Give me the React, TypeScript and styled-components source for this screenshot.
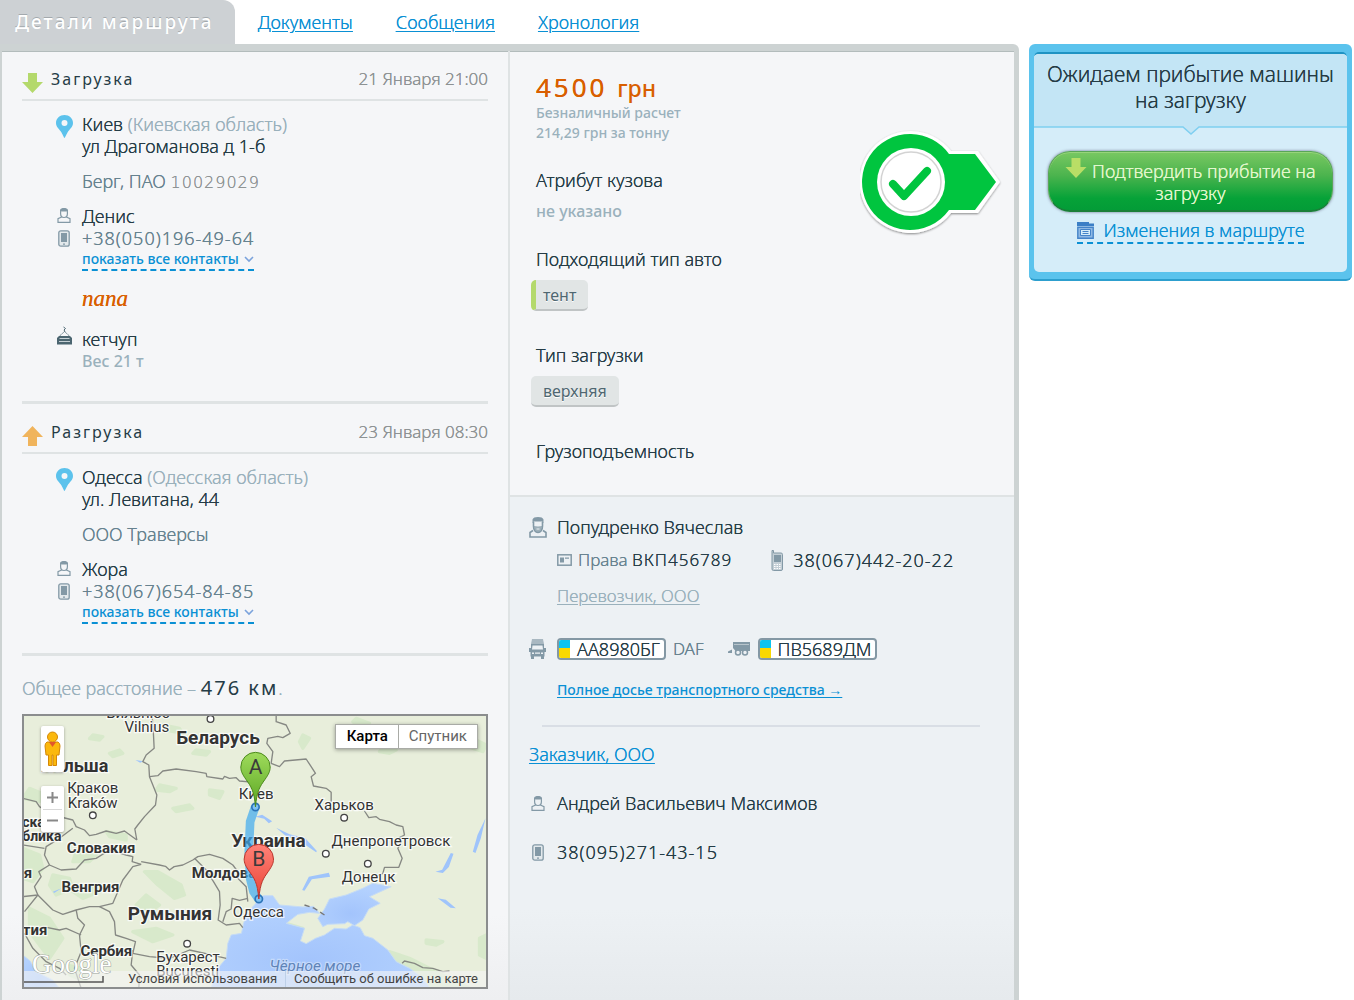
import React from 'react';
import styled, { createGlobalStyle, css } from 'styled-components';

const c = {
  ink: '#253c46',
  slate: '#66828f',
  mist: '#9ab1bc',
  grey: '#8d9293',
  link: '#0a90d4',
  orange: '#d95f00',
  frame: '#cdd3d3',
  rule: '#dfe3e4',
  panel: '#f5f6f8',
  panelAlt: '#edf1f4',
  icon: '#8399a6',
};

const sans = '"Noto Sans", "Open Sans", sans-serif';

// The light weight is drawn twice in its own colour so that thin strokes stay legible.
const GlobalStyle = createGlobalStyle`
  * { box-sizing: border-box; }
  body { margin: 0; background: #fff; color: ${c.ink}; font: 300 18px/22px ${sans}; text-shadow: 0 0 0 currentColor; }
  h1, h2, h3, p, dl, dd, dt, ul { margin: 0; padding: 0; font: inherit; }
  button { font: inherit; cursor: pointer; text-shadow: inherit; }
  svg { display: block; }
`;

const Page = styled.div`
  display: flex;
  flex-direction: column;
  height: 100vh;
  min-height: 1000px;
  overflow: hidden;
`;

const Tabs = styled.nav`
  display: flex;
  align-items: center;
  gap: 43px;
  height: 44px;
`;

const ActiveTab = styled.h1`
  flex: none;
  height: 44px;
  padding: 0 21px 0 15px;
  margin-right: -20px;
  border-radius: 0 12px 0 0;
  background: #cdd1d4;
  color: #fff;
  font-size: 19px;
  font-weight: 500;
  line-height: 44px;
  letter-spacing: 2px;
  text-shadow: 0 -1px 0 #a3a9ad;
`;

const Link = styled.a<{ $muted?: boolean; $small?: boolean }>`
  color: ${(p) => (p.$muted ? c.mist : c.link)};
  text-decoration: underline;
  text-underline-offset: 2px;
  ${(p) => p.$muted && css`font-size: 17px;`}
  ${(p) => p.$small && css`font-size: 14px; font-weight: 500; text-shadow: none;`}
`;

const Columns = styled.div`
  display: flex;
  flex: 1;
  align-items: flex-start;
  gap: 10px;
  padding-right: 2px;
`;

const Panel = styled.main`
  display: grid;
  grid-template-columns: 509fr 505fr;
  flex: 1;
  align-self: stretch;
  border: solid ${c.frame};
  border-width: 7px 5px 0 2px;
  border-radius: 0 6px 0 0;
  background: linear-gradient(${c.panel} 91%, #eeeff1);
  box-shadow: inset 0 1px 0 #b3bcbc;
`;

const Route = styled.section`
  padding: 0 20px;
  border-right: 2px solid ${c.rule};
`;

const StopBox = styled.section`
  padding-bottom: 29px;
  border-bottom: 3px solid ${c.rule};
`;

const StopHead = styled.header`
  display: flex;
  align-items: center;
  gap: 8px;
  height: 50px;
  padding-top: 8px;
  border-bottom: 2px solid ${c.rule};
  & > svg { margin-top: 8px; }
`;

const StopTitle = styled.h2`
  flex: 1;
  font-size: 16px;
  font-weight: 400;
  letter-spacing: 2px;
  text-shadow: none;
`;

const StopTime = styled.time`
  color: ${c.grey};
  font-size: 17px;
`;

const StopBody = styled.div`
  display: flex;
  flex-direction: column;
  gap: 13px;
  padding: 12px 0 0 34px;
`;

const IconLine = styled.div<{ $iconTop?: number }>`
  display: grid;
  grid-template-columns: 16px 1fr;
  column-gap: 10px;
  align-items: start;
  & > svg { grid-row: span 2; justify-self: center; margin-top: ${(p) => p.$iconTop ?? 3}px; }
  & > :not(svg) { grid-column: 2; justify-self: start; }
`;

const Text = styled.p<{ $tone?: 'slate' | 'mist' }>`
  color: ${(p) => (p.$tone ? c[p.$tone] : c.ink)};
`;

const Region = styled.span`
  color: ${c.mist};
`;

const Code = styled.span`
  color: ${c.grey};
  font: 200 16px/16px "DejaVu Sans", sans-serif;
  letter-spacing: 1px;
`;

const StopPhone = styled.p`
  color: ${c.slate};
  letter-spacing: 1px;
`;

const MoreButton = styled.button`
  display: flex;
  align-items: center;
  gap: 5px;
  height: 22px;
  padding: 0;
  border: 0;
  border-bottom: 2px dashed ${c.link};
  background: none;
  color: ${c.link};
  font-size: 14px;
  font-weight: 500;
  text-shadow: none;
`;

const Note = styled.p`
  padding: 4px 0 5px 26px;
  color: ${c.orange};
  font: italic 23px/22px "Liberation Serif", serif;
`;

const Minor = styled.p`
  color: ${c.mist};
  font-size: 16px;
  font-weight: 500;
  text-shadow: none;
`;

const Distance = styled.p`
  padding: 20px 0 14px;
  color: ${c.mist};
  line-height: 24px;
  strong {
    color: ${c.ink};
    font-size: 20px;
    font-weight: 400;
    letter-spacing: 2px;
    text-shadow: none;
  }
`;

const MapBox = styled.div`
  position: relative;
  height: 275px;
  overflow: hidden;
  border: 2px solid #8b8d8e;
  background: #e8eedb;
  font-family: Roboto, sans-serif;
  font-weight: 400;
  text-shadow: none;
`;

const MapArt = styled.svg`
  width: 100%;
  height: 100%;
  text { font-family: Roboto, sans-serif; fill: #333; stroke: #fff; stroke-opacity: .8; stroke-width: 7px; paint-order: stroke; }
`;

const MapTypes = styled.div`
  position: absolute;
  top: 8px;
  right: 8px;
  display: flex;
  border: 1px solid #a9aba6;
  box-shadow: 0 1px 4px rgba(0, 0, 0, .35);
`;

const MapType = styled.button<{ $on?: boolean }>`
  height: 23px;
  padding: 0 10px;
  border: 0;
  border-left: 1px solid ${(p) => (p.$on ? 'transparent' : '#a9aba6')};
  background: #fff;
  color: ${(p) => (p.$on ? '#000' : '#666')};
  font-size: 15px;
  font-weight: ${(p) => (p.$on ? 500 : 400)};
  line-height: 23px;
`;

const MapTools = styled.div`
  position: absolute;
  top: 10px;
  left: 17px;
  display: flex;
  flex-direction: column;
  gap: 14px;
`;

const Tool = styled.div`
  display: flex;
  flex-direction: column;
  width: 23px;
  height: 46px;
  padding: 0 2px;
  border-radius: 2px;
  background: #fff;
  box-shadow: 0 1px 3px rgba(0, 0, 0, .35);
`;

const ToolButton = styled.button`
  display: flex;
  flex: 1;
  align-items: center;
  justify-content: center;
  padding: 0;
  border: 0;
  background: none;
  & + & { border-top: 1px solid #d8d8d8; }
`;

const MapFoot = styled.div`
  position: absolute;
  right: 0;
  bottom: 0;
  left: 0;
  display: flex;
  justify-content: flex-end;
  height: 16px;
  background: rgba(245, 245, 245, .6);
  a {
    padding: 0 8px;
    color: #444;
    font-size: 13px;
    line-height: 16px;
    text-decoration: none;
  }
  a + a { border-left: 1px solid #bdd0e8; }
`;

const MapLogo = styled.svg`
  position: absolute;
  bottom: 0;
  left: 0;
  width: 84px;
  height: 40px;
  overflow: visible;
  text { font-family: "Liberation Serif", serif; fill: #fff; stroke: #9a9f9a; stroke-width: 1px; paint-order: stroke; }
`;

const Side = styled.section`
  display: flex;
  flex-direction: column;
`;

const Offer = styled.div`
  display: flex;
  justify-content: space-between;
  align-items: flex-start;
  height: 446px;
  padding: 21px 12px 0 26px;
  border-bottom: 2px solid ${c.rule};
`;

const Stamp = styled.svg`
  flex: none;
  margin-top: 58px;
`;

const Price = styled.p`
  color: ${c.orange};
  font-size: 26px;
  line-height: 30px;
  font-weight: 400;
  letter-spacing: 3px;
  span { font-size: 23px; font-weight: 500; letter-spacing: 0; text-shadow: none; }
`;

const Terms = styled.p`
  padding-bottom: 26px;
  color: ${c.mist};
  font-size: 14px;
  font-weight: 500;
  line-height: 20px;
  text-shadow: none;
`;

const Specs = styled.dl`
  display: flex;
  flex-direction: column;
`;

const Spec = styled.div<{ $short?: boolean }>`
  height: ${(p) => (p.$short ? 79 : 96)}px;
  dd { margin-top: ${(p) => (p.$short ? 8 : 10)}px; }
`;

const Tag = styled.span<{ $marked?: boolean }>`
  display: inline-block;
  height: 31px;
  margin-left: -5px;
  padding: 0 12px 0 ${(p) => (p.$marked ? 7 : 12)}px;
  border-left: ${(p) => (p.$marked ? `5px solid #b4d96c` : '0')};
  border-bottom: 2px solid #c0c4c5;
  border-radius: 5px;
  background: #e1e5e5;
  color: #4f6771;
  font-size: 16px;
  font-weight: 400;
  line-height: 30px;
  text-shadow: 0 1px 0 #fff;
`;

const Carrier = styled.div`
  flex: 1;
  padding: 19px 34px 0 19px;
  background: linear-gradient(${c.panelAlt} 82%, #e6eaed);
`;

const Row = styled.div<{ $top?: number; $indent?: boolean }>`
  display: flex;
  align-items: center;
  min-height: 22px;
  margin-top: ${(p) => p.$top ?? 0}px;
  padding-left: ${(p) => (p.$indent ? 28 : 0)}px;
`;

const Slot = styled.span`
  display: flex;
  flex: none;
  justify-content: center;
  width: 18px;
  margin-right: 10px;
`;

const Pair = styled.span<{ $gap: number }>`
  display: flex;
  align-items: center;
  gap: ${(p) => p.$gap}px;
`;

const License = styled.span`
  color: ${c.slate};
  font-size: 17px;
  b { color: ${c.ink}; font-weight: 300; letter-spacing: 1px; }
`;

const Phone = styled.span`
  letter-spacing: 1px;
`;

const PlateBox = styled.span`
  display: flex;
  align-items: center;
  gap: 7px;
  height: 22px;
  padding-right: 4px;
  overflow: hidden;
  border: 2px solid #8498a4;
  border-radius: 4px;
  background: #fff;
  line-height: 18px;
  &::before {
    content: '';
    align-self: stretch;
    width: 11px;
    background: linear-gradient(#0cc4ef 45%, #f9d800 45%);
  }
`;

const Divider = styled.hr`
  height: 2px;
  margin: 24px 0 16px 13px;
  border: 0;
  background: #d9dee5;
`;

const ActionBox = styled.aside`
  flex: none;
  width: 323px;
  padding: 8px 5px 7px;
  border-bottom: 2px solid #2d9fce;
  border-radius: 6px;
  background: #5bc3ed;
`;

const ActionInner = styled.div`
  overflow: hidden;
  border-top: 2px solid #1f93c3;
  border-radius: 5px;
  background: #d5edf9;
`;

const ActionTitle = styled.h2`
  padding: 7px 8px 13px;
  background: #c3e5f5;
  font-size: 21px;
  line-height: 26px;
  text-align: center;
`;

const Notch = styled.svg`
  width: 100%;
  height: 10px;
`;

const ActionBody = styled.div`
  display: flex;
  flex-direction: column;
  align-items: center;
  padding: 15px 14px 28px;
`;

const Confirm = styled.button`
  width: 100%;
  height: 61px;
  padding: 0 16px;
  border: 1px solid #5aa558;
  border-bottom: 2px solid #1a7f38;
  border-radius: 22px;
  background: linear-gradient(#79c862, #4cb44e 40%, #06a238 80%, #039c37);
  box-shadow: 0 0 3px rgba(60, 60, 90, .7), inset 0 1px 0 #97d47b;
  color: #e2f7cd;
  line-height: 22px;
  svg { display: inline-block; }
`;

const Changes = styled.a`
  display: flex;
  align-items: center;
  gap: 10px;
  height: 26px;
  margin-top: 6px;
  border-bottom: 2px dashed ${c.link};
  color: ${c.link};
  text-decoration: none;
`;

const Arrow = ({ up, fill, size = 21 }: { up?: boolean; fill: string; size?: number }) => (
  <svg width={size} height="20" viewBox="0 0 21 20" aria-hidden="true">
    <path fill={fill} d={up ? 'M10.500 0L21 11H15V20H6V11H0Z' : 'M6 0H15V9H21L10.500 20L0 9H6Z'} />
  </svg>
);

const PinIcon = () => (
  <svg width="17" height="23" viewBox="0 0 17 23" aria-hidden="true">
    <path fill="#5cc2ec" fillRule="evenodd" d="M8.500 0C3.800 0 0 3.500 0 8c0 4.200 3.500 6 5.500 9.500C6.800 19.800 8 23 8.500 23s1.700-3.200 3-5.500C13.500 14 17 12.200 17 8c0-4.500-3.800-8-8.500-8zm0 5a3 3 0 1 1 0 6 3 3 0 0 1 0-6z" />
  </svg>
);

const PersonIcon = () => (
  <svg width="14" height="15" viewBox="0 0 14 15" aria-hidden="true">
    <path fill="none" stroke={c.icon} strokeWidth="1.200" d="M3.600 3.500v2.300C3.600 8 5.200 9.500 7 9.500s3.400-1.500 3.400-3.700V3.500M4.600 9L1 10.600V14.300h12V10.600L9.400 9" />
    <path fill={c.icon} d="M3 5V2C3.500.5 5 0 7 0s3.500.5 4 2v3l-1-1.500H4z" />
  </svg>
);

const DriverIcon = () => (
  <svg width="18" height="21" viewBox="0 0 18 21" aria-hidden="true">
    <path fill={c.icon} d="M3.500 6V2.500C4 .8 6 0 9 0s5 .8 5.500 2.500V6L13 4.500H5z" />
    <path fill="none" stroke={c.icon} strokeWidth="1.600" d="M4.500 5v4c0 4 2 6.500 4.500 6.500S13.500 13 13.500 9V5M4 13.500L1 15.500V20h16v-4.500l-3-2" />
    <path fill={c.icon} d="M5 9l4 .5 4-.5c0 4-1.500 6-4 6S5 13 5 9z" opacity=".75" />
    <path stroke="#edf1f4" d="M7.500 12h3" />
  </svg>
);

const MobileIcon = () => (
  <svg width="12" height="17" viewBox="0 0 12 17" aria-hidden="true">
    <rect x=".8" y=".8" width="10.400" height="15.400" rx="2" fill="#e3e9ec" stroke={c.icon} strokeWidth="1.300" />
    <path fill={c.icon} d="M3 3h6v9H3zM5 13.500h2v1.300H5z" />
  </svg>
);

const HandsetIcon = () => (
  <svg width="12" height="21" viewBox="0 0 12 21" aria-hidden="true">
    <path fill="#c3ced5" stroke={c.icon} d="M1 .5h1.500V3H10a1.500 1.500 0 0 1 1.500 1.500V19a1.500 1.500 0 0 1-1.500 1.500H2.500A1.500 1.500 0 0 1 1 19z" />
    <path fill={c.icon} d="M3 5h7v7H3z" />
    <path stroke="#fff" strokeDasharray="1.500 1" d="M3 14.500h7M3 16.500h7M3 18.500h7" />
  </svg>
);

const CardIcon = () => (
  <svg width="15" height="12" viewBox="0 0 15 12" aria-hidden="true">
    <rect x=".8" y=".8" width="13.400" height="10.400" fill="#edf1f4" stroke={c.icon} strokeWidth="1.500" />
    <path fill={c.icon} d="M3 3.500h4v5H3zM8 3.500h4v1.200H8z" />
  </svg>
);

const CargoIcon = () => (
  <svg width="15" height="19" viewBox="0 0 15 19" aria-hidden="true">
    <path fill="none" stroke="#4b6570" d="M6.500 1l2 1.500L7 4l1 1.500" />
    <path fill="none" stroke="#4b6570" strokeDasharray="1.500 1" d="M7.500 5.500L2 10.500M7.500 5.500L13 10.500" />
    <path fill="#4b6570" d="M2 10h11l2 2v6.500H0V12z" />
    <path stroke="#c5d0d5" d="M2.500 12.500h10M2 15.500h11" />
  </svg>
);

const TruckIcon = () => (
  <svg width="17" height="20" viewBox="0 0 17 20" aria-hidden="true">
    <path fill="#a9b8c1" d="M3 0h11l1 5H2z" />
    <path fill={c.icon} d="M2 5h13v4h2v4h-1.500v4.500H15V20h-3v-2.500H5V20H2v-2.500h-.5V13H0V9h2z" />
    <path fill="#edf1f4" d="M3.500 6.500h10l.5 4H3zM3 13.500h2v1.500H3zM12 13.500h2v1.500h-2zM6 13.500h5v1.200H6z" />
  </svg>
);

const TrailerIcon = () => (
  <svg width="22" height="14" viewBox="0 0 22 14" aria-hidden="true">
    <path fill={c.icon} d="M5 0h17v9H7.500L5 6zM0 9.500l4-2V11H0z" />
    <path stroke="#b7c4cb" d="M6 2.500h15" />
    <circle cx="10" cy="10.500" r="2.500" fill="#edf1f4" stroke={c.icon} strokeWidth="1.500" />
    <circle cx="17" cy="10.500" r="2.500" fill="#edf1f4" stroke={c.icon} strokeWidth="1.500" />
  </svg>
);

const WindowIcon = () => (
  <svg width="17" height="17" viewBox="0 0 17 17" aria-hidden="true">
    <path fill="#3b7fc6" d="M0 0h12v1.500h5V4H0z" />
    <path fill="#8fb9e4" stroke="#4484c9" strokeWidth="1.400" d="M.8 5.200h15.400v11H.8z" />
    <path fill="#d5edf9" stroke="#4484c9" d="M3.500 7.500h10v6h-10z" />
    <path stroke="#4484c9" d="M5.500 9.500h6M5.500 11.500h6" />
  </svg>
);

const Chevron = () => (
  <svg width="10" height="7" viewBox="0 0 10 7" aria-hidden="true">
    <path fill="none" stroke="#7ba3dc" strokeWidth="1.600" d="M1 1l4 4 4-4" />
  </svg>
);

const Plate = ({ children }: { children: string }) => <PlateBox>{children}</PlateBox>;

type StopProps = {
  up?: boolean;
  title: string;
  time: string;
  city: string;
  region: string;
  street: string;
  company: string;
  code?: string;
  person: string;
  phone: string;
  children?: React.ReactNode;
};

const Stop = (p: StopProps) => (
  <StopBox>
    <StopHead>
      <Arrow up={p.up} fill={p.up ? '#f0b45c' : '#b4d96c'} />
      <StopTitle>{p.title}</StopTitle>
      <StopTime>{p.time}</StopTime>
    </StopHead>
    <StopBody>
      <IconLine $iconTop={2}>
        <PinIcon />
        <Text>{p.city} <Region>({p.region})</Region></Text>
        <Text>{p.street}</Text>
      </IconLine>
      <IconLine>
        <Text $tone="slate">{p.company} {p.code && <Code>{p.code}</Code>}</Text>
      </IconLine>
      <div>
        <IconLine><PersonIcon /><Text>{p.person}</Text></IconLine>
        <IconLine><MobileIcon /><StopPhone>{p.phone}</StopPhone></IconLine>
        <IconLine><MoreButton type="button">показать все контакты <Chevron /></MoreButton></IconLine>
      </div>
      {p.children}
    </StopBody>
  </StopBox>
);

const borders = [
  'M428 33L432 90L434 130L410 150L400 170L418 180L420 215L430 240L442 270L438 300L405 335L385 360L376 372L382 405',
  'M420 215L445 212L460 198L500 192L560 200L590 205L592 215L640 222L645 214L660 220L680 218L690 228L735 232L780 180',
  'M800 33L800 50L830 60L842 85L820 98L805 94L775 100L772 115L790 140L785 175L810 185L825 168L890 162L905 185L918 205L905 215L912 243L950 250L965 262L965 290',
  'M1065 318L1078 338L1100 335L1110 343L1140 350L1160 360L1180 365L1185 390L1170 398L1176 410L1165 430L1178 460L1168 487L1125 487L1120 505L1105 512',
  'M40 280L80 290L90 305L130 330L190 345L200 365L225 375L240 392L260 388L290 378L320 385L345 378L382 405',
  'M190 370L150 400L110 425L105 450L120 480L155 495L200 492L225 465L260 460L300 435L350 450L370 455L368 470L395 478',
  'M40 420L105 430M120 480L88 500L95 515L75 545L85 570L40 575',
  'M395 478L370 485L340 525L310 595L270 605L240 605L200 615L160 628L130 615L85 570',
  'M395 470L450 480L468 484L480 495L494 485L520 480L550 465L565 455L600 448L640 460L670 480L685 500L685 520L710 545L715 590',
  'M555 460L590 495L612 530L630 560L632 600L626 645L650 660L690 655L700 668',
  'M640 650L650 620L665 612L668 580L690 586L715 580',
  'M270 605L300 620L315 650L318 690L350 700L378 710L370 745L420 755L480 760L540 735L600 748L650 760',
  'M370 735L365 780L390 810L388 850M200 615L205 640L225 660L210 690L215 740L195 790L215 850',
  'M45 685L70 730L110 770L150 790L170 810M100 665L150 675L170 670L215 690M85 570L45 620',
  'M1178 775L1185 768L1215 775L1240 788L1270 790L1300 800L1320 798',
];

const greens = [
  'M40 430l50 20 10 40-30 40-30-10zM130 510l50 10 10 30-50 20-20-30zM60 610l60 30 40 60-40 60-60-80z',
  'M405 500l40 0 70 40 10 30-30 10-50-40zM410 570l40 30-30 20-40-20zM370 680l70-10 50 20-60 20z',
  'M200 440l60 10-20 20-50 0zM60 250l50 20-20 20-50-10zM290 380l60 10 0 15-50-10zM190 560l50-20 30 20-50 20z',
  'M450 240l50 10-20 10-40-5zM490 310l50-10 10 10-50 10zM250 90l30 5-10 10-30-4zM300 145l30-10 10 10-30 10z',
  'M460 60l50 10 10 15-50-10zM560 135l40 5-10 10-40-5zM1040 40l40 15-30 15-20-20zM1120 125l40 10-20 10-30-5z',
  'M1140 740l60 20 120 60 60 30H1260l-70-50zM1410 700l20-10v70l-20-10zM1250 705l50 5-20 10-30-5zM880 90l20 10-20 30-10-20z',
  'M830 655l50 15-10 15zM1350 80l80 40-10 20-60-20zM600 255l40 5-10 20-30-10zM170 780l50 10 10 40-50-20z',
];

const waters = [
  'M748 582L735 600L720 615L702 655L696 685L665 690L655 715L650 760L625 790L612 820L605 850H1262L1235 815L1200 790L1160 770L1135 735L1090 700L1065 692L1052 668L1030 660L1010 672L975 670L945 690L918 700L890 716L873 708L885 670L830 655L865 628L900 622L930 625L912 604L880 606L810 600L790 572L762 572Z',
  'M925 640L945 612L960 582L1010 570L1060 550L1090 535L1145 545L1080 575L1112 595L1078 612L1060 645L1035 662L1015 650L1005 656L955 658L940 665Z',
  'M40 750L62 768L80 800L130 825L150 850H40Z',
];

const lakes = [
  'M878 555l20-40 60-12 4 12-55 8-22 34zM1278 500l20-6 26-50 8 2-14 40-18 18zM738 335l20-6 30 20-10 6-14-14zM800 368l40 20 46 10 36 40-2 4-44-30-46-18z',
  'M1285 580l24 4 30 26-16-2zM378 165l24 4-10 4zM130 560l26-10-22 14zM1390 440l14-50 24-50-14 60-16 44z',
];

const cities: [number, number][] = [[603, 42], [250, 331], [533, 716], [1004, 338], [949, 446], [1075, 476]];

const labels: [number, number, number, string, boolean?][] = [
  [290, 38, 45, 'Вильнюс'], [345, 80, 45, 'Vilnius'], [500, 118, 57, 'Беларусь', true], [94, 200, 54, 'Польша', true],
  [173, 265, 45, 'Краков'], [175, 308, 45, 'Kraków'], [38, 365, 42, 'ская', true], [38, 408, 42, 'блика', true],
  [172, 445, 45, 'Словакия', true], [156, 562, 45, 'Венгрия', true], [43, 520, 45, 'я', true], [355, 645, 57, 'Румыния', true],
  [40, 690, 45, 'тия', true], [213, 753, 45, 'Сербия', true], [440, 770, 45, 'Бухарест'], [440, 812, 45, 'București'],
  [547, 520, 45, 'Молдова', true], [665, 427, 57, 'Украина', true], [688, 282, 45, 'Киев'], [670, 635, 45, 'Одесса'],
  [915, 315, 45, 'Харьков'], [966, 423, 45, 'Днепропетровск'], [997, 530, 45, 'Донецк'],
];

const Marker = ({ x, y, letter, from, to, line }: { x: number; y: number; letter: string; from: string; to: string; line: string }) => (
  <g transform={`translate(${x} ${y})`}>
    <defs>
      <linearGradient id={`pin${letter}`} x2="0" y2="1"><stop stopColor={from} /><stop offset="1" stopColor={to} /></linearGradient>
    </defs>
    <path d="M0 0C-4-50-14-62-28-82C-40-99-44-108-44-120a44 44 0 0 1 88 0C44-108 40-99 28-82C14-62 4-50 0 0Z" fill={`url(#pin${letter})`} stroke={line} strokeWidth="3" />
    <text y="-98" fontSize="63" textAnchor="middle" style={{ fill: '#3b3b3b', stroke: 'none' }}>{letter}</text>
  </g>
);

const RouteMap = () => (
  <MapBox>
    <MapArt viewBox="42 33 1389 813" preserveAspectRatio="xMidYMid slice" role="img" aria-label="Киев — Одесса">
      <defs>
        <radialGradient id="sea" cx=".45" cy=".7" r=".6"><stop stopColor="#a3c4fc" /><stop offset="1" stopColor="#b3d1fe" /></radialGradient>
      </defs>
      <path fill="#e8eedb" d="M0 0h1500v900H0z" />
      {greens.map((d) => <path key={d} d={d} fill="#d2e8c5" strokeLinejoin="round" stroke="#d2e8c5" strokeWidth="10" opacity=".7" />)}
      {waters.map((d) => <path key={d} d={d} fill="url(#sea)" stroke="#c6dcf5" strokeWidth="3" />)}
      {lakes.map((d) => <path key={d} d={d} fill="#9fc4fb" />)}
      <path d="M885 600l30 10 30 20" fill="none" stroke="#777" strokeWidth="4" strokeDasharray="16 10" />
      {borders.map((d) => <path key={d} d={d} fill="none" stroke="#868883" strokeWidth="4" strokeLinejoin="round" />)}
      {cities.map(([x, y]) => <circle key={x} cx={x} cy={y} r="10" fill="#fff" stroke="#444" strokeWidth="4" />)}
      {labels.map(([x, y, size, name, bold]) => (
        <text key={name} x={x} y={y} fontSize={size} fontWeight={bold ? 700 : 400}>{name}</text>
      ))}
      <text x="780" y="797" fontSize="46" fontStyle="italic" style={{ fill: '#5f84b8', stroke: '#cfe0fb' }}>Чёрное море</text>
      <path d="M737 306L722 350L718 440L722 520L732 560L747 582" fill="none" stroke="#3fa9f0" strokeOpacity=".7" strokeWidth="26" strokeLinejoin="round" />
      <circle cx="738" cy="306" r="11" fill="#7ec1f2" stroke="#2b74b8" strokeWidth="5" />
      <circle cx="748" cy="582" r="11" fill="#7ec1f2" stroke="#2b74b8" strokeWidth="5" />
      <Marker x={738} y={306} letter="A" from="#9fdb5c" to="#5ba622" line="#4c8a1d" />
      <Marker x={748} y={582} letter="B" from="#ff8278" to="#ea4335" line="#b9352c" />
    </MapArt>
    <MapTools>
      <Tool>
        <ToolButton type="button" aria-label="Просмотр улиц">
          <svg width="17" height="36" viewBox="0 0 17 36">
            <path fill="#fbb80c" stroke="#d48806" d="M3 11h11q2 1 2 4l-1 9h-2.500v10.500h-3.500V24h-1v10.500H4.500V24H2L1 15q0-3 2-4z" />
            <circle cx="8.500" cy="6" r="5" fill="#fbb80c" stroke="#d48806" />
            <path fill="#e2562b" d="M5 11h7l-3.500 5z" />
          </svg>
        </ToolButton>
      </Tool>
      <Tool>
        <ToolButton type="button" aria-label="Приблизить">
          <svg width="11" height="11" viewBox="0 0 11 11"><path stroke="#888" strokeWidth="2" d="M0 5.500h11M5.500 0v11" /></svg>
        </ToolButton>
        <ToolButton type="button" aria-label="Отдалить">
          <svg width="11" height="11" viewBox="0 0 11 11"><path stroke="#888" strokeWidth="2" d="M0 5.500h11" /></svg>
        </ToolButton>
      </Tool>
    </MapTools>
    <MapTypes>
      <MapType type="button" $on>Карта</MapType>
      <MapType type="button">Спутник</MapType>
    </MapTypes>
    <MapFoot>
      <a href="#terms">Условия использования</a>
      <a href="#report">Сообщить об ошибке на карте</a>
    </MapFoot>
    <MapLogo viewBox="0 0 84 40" role="img" aria-label="Google">
      <text x="8" y="26" fontSize="27">Google</text>
      <path fill="none" stroke="#555" strokeWidth="1.500" d="M0 35H79V29" />
    </MapLogo>
  </MapBox>
);

const ApprovedStamp = () => (
  <Stamp width="142" height="106" viewBox="0 0 142 106" role="img" aria-label="Подтверждено">
    <defs>
      <filter id="lift" x="-10%" y="-10%" width="120%" height="125%">
        <feDropShadow dx="0" dy="1" stdDeviation="1" floodOpacity=".45" />
      </filter>
    </defs>
    <path filter="url(#lift)" fill="#fff" d="M51 1a51 51 0 0 1 40 20h27l22 31-22 31H91A51 51 0 1 1 51 1z" />
    <path fill="#00c53f" d="M51 4a48 48 0 0 1 38 20h26l21 28-21 28H89A48 48 0 1 1 51 4z" />
    <circle cx="51" cy="52" r="34" fill="#fff" />
    <circle cx="51" cy="52" r="30" fill="none" stroke="#d3d3d3" strokeWidth="1.500" />
    <path fill="none" stroke="#00c53f" strokeWidth="8" strokeLinecap="round" strokeLinejoin="round" d="M33 54L44 66L67 41" />
  </Stamp>
);

export default function App() {
  return (
    <>
      <GlobalStyle />
      <Page>
        <Tabs>
          <ActiveTab>Детали маршрута</ActiveTab>
          <Link href="#documents">Документы</Link>
          <Link href="#messages">Сообщения</Link>
          <Link href="#history">Хронология</Link>
        </Tabs>
        <Columns>
          <Panel>
            <Route>
              <Stop
                title="Загрузка" time="21 Января 21:00" city="Киев" region="Киевская область"
                street="ул Драгоманова д 1-б" company="Берг, ПАО" code="10029029"
                person="Денис" phone="+38(050)196-49-64"
              >
                <Note>папа</Note>
                <IconLine $iconTop={-2}>
                  <CargoIcon />
                  <Text>кетчуп</Text>
                  <Minor>Вес 21 т</Minor>
                </IconLine>
              </Stop>
              <Stop
                up title="Разгрузка" time="23 Января 08:30" city="Одесса" region="Одесская область"
                street="ул. Левитана, 44" company="ООО Траверсы" person="Жора" phone="+38(067)654-84-85"
              />
              <Distance>Общее расстояние – <strong>476 км</strong>.</Distance>
              <RouteMap />
            </Route>
            <Side>
              <Offer>
                <div>
                  <Price>4500 <span>грн</span></Price>
                  <Terms>Безналичный расчет<br />214,29 грн за тонну</Terms>
                  <Specs>
                    <Spec $short><dt>Атрибут кузова</dt><dd><Minor as="span">не указано</Minor></dd></Spec>
                    <Spec><dt>Подходящий тип авто</dt><dd><Tag $marked>тент</Tag></dd></Spec>
                    <Spec><dt>Тип загрузки</dt><dd><Tag>верхняя</Tag></dd></Spec>
                    <div><dt>Грузоподъемность</dt></div>
                  </Specs>
                </div>
                <ApprovedStamp />
              </Offer>
              <Carrier>
                <Row><Slot><DriverIcon /></Slot>Попудренко Вячеслав</Row>
                <Row $top={11} $indent>
                  <Pair $gap={39}>
                    <Pair $gap={6}><CardIcon /><License>Права <b>ВКП456789</b></License></Pair>
                    <Pair $gap={10}><HandsetIcon /><Phone>38(067)442-20-22</Phone></Pair>
                  </Pair>
                </Row>
                <Row $top={14} $indent><Link $muted href="#carrier">Перевозчик, ООО</Link></Row>
                <Row $top={31}>
                  <Slot><TruckIcon /></Slot>
                  <Pair $gap={24}>
                    <Pair $gap={7}><Plate>АА8980БГ</Plate><License>DAF</License></Pair>
                    <Pair $gap={8}><TrailerIcon /><Plate>ПВ5689ДМ</Plate></Pair>
                  </Pair>
                </Row>
                <Row $top={19} $indent><Link $small href="#dossier">Полное досье транспортного средства →</Link></Row>
                <Divider />
                <Row><Link href="#customer">Заказчик, ООО</Link></Row>
                <Row $top={27}><Slot><PersonIcon /></Slot>Андрей Васильевич Максимов</Row>
                <Row $top={27}><Slot><MobileIcon /></Slot><Phone>38(095)271-43-15</Phone></Row>
              </Carrier>
            </Side>
          </Panel>
          <ActionBox>
            <ActionInner>
              <ActionTitle>Ожидаем прибытие машины на загрузку</ActionTitle>
              <Notch viewBox="0 0 313 10" preserveAspectRatio="xMidYMin slice" aria-hidden="true">
                <path fill="#c3e5f5" d="M0 0H313V1H165L157 8L149 1H0Z" />
                <path fill="none" stroke="#7fcff0" strokeWidth="1.500" d="M0 1H149L157 8L165 1H313" />
              </Notch>
              <ActionBody>
                <Confirm type="button">
                  <Arrow fill="#b9de66" size={22} /> Подтвердить прибытие на загрузку
                </Confirm>
                <Changes href="#changes"><WindowIcon />Изменения в маршруте</Changes>
              </ActionBody>
            </ActionInner>
          </ActionBox>
        </Columns>
      </Page>
    </>
  );
}
